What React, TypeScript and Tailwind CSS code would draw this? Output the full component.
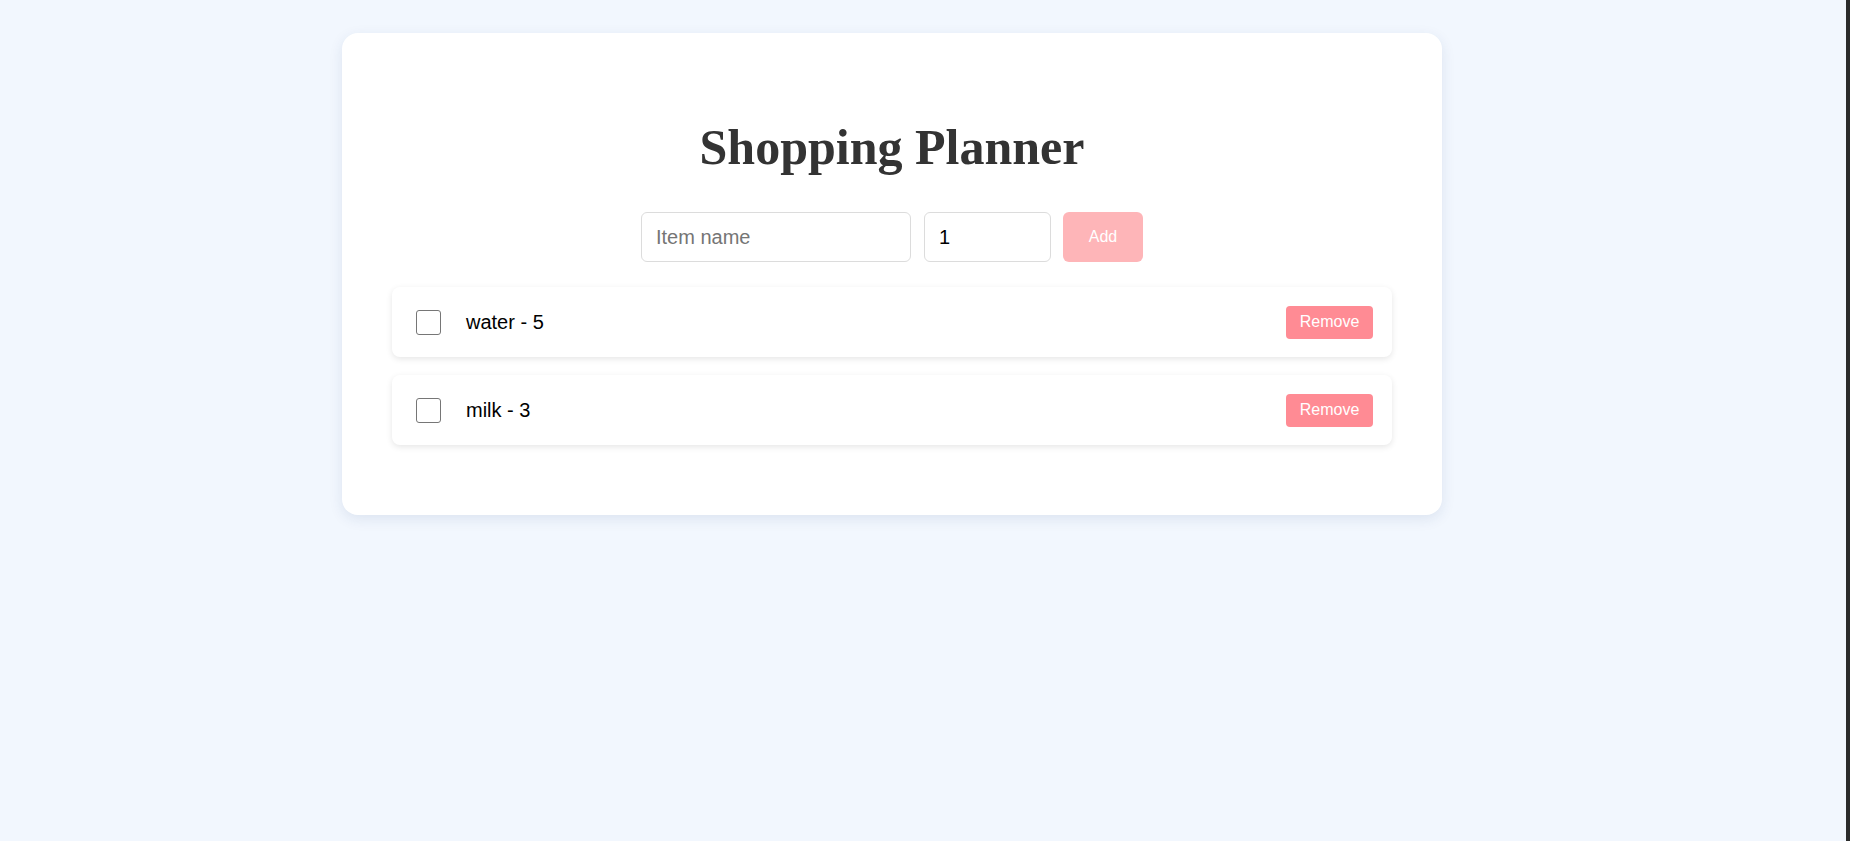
import React from "react";

const items = [
  { name: "water", qty: 5 },
  { name: "milk", qty: 3 },
];

export default function App() {
  return (
    <div className="flex h-[841px] w-full overflow-hidden bg-[#f2f7fe]" style={{ fontFamily: '"Liberation Sans", Arial, sans-serif' }}>
      <div className="flex-1">
        <div className="ml-[342px] mt-[33px] w-[1100px] rounded-[16px] bg-white px-[50px] pt-[86px] pb-[70px] shadow-[0_4px_14px_rgba(30,60,120,0.10)]">
          <h1
            className="text-center text-[50px] font-bold leading-[56px] text-[#333]"
            style={{ fontFamily: '"Liberation Serif", "Times New Roman", serif' }}
          >
            Shopping Planner
          </h1>
          <div className="mt-[37px] flex items-center justify-center">
            <input
              placeholder="Item name"
              className="h-[50px] w-[270px] rounded-[6px] border border-[#dcdcdc] px-[14px] text-[20px] text-black outline-none placeholder:text-[#757575]"
            />
            <input
              defaultValue="1"
              className="ml-[13px] h-[50px] w-[127px] rounded-[6px] border border-[#dcdcdc] px-[14px] text-[20px] text-black outline-none"
            />
            <button className="ml-[12px] h-[50px] w-[80px] rounded-[6px] bg-[#feb5b8] text-[16px] text-white">
              Add
            </button>
          </div>
          <div className="mt-[25px] flex flex-col gap-[18px]">
            {items.map((it) => (
              <div
                key={it.name}
                className="flex h-[70px] items-center rounded-[8px] bg-white pl-[24px] pr-[19px] shadow-[0_2px_6px_rgba(0,0,0,0.10)]"
              >
                <div className="h-[25px] w-[25px] rounded-[3px] border border-[#767676] bg-white" />
                <span className="ml-[25px] flex-1 text-[20px] text-black">
                  {it.name} - {it.qty}
                </span>
                <button className="h-[33px] w-[87px] rounded-[4px] bg-[#ff8b94] text-[16px] text-white">
                  Remove
                </button>
              </div>
            ))}
          </div>
        </div>
      </div>
      <div className="w-[4px] bg-[#2b2b2b]" />
    </div>
  );
}
